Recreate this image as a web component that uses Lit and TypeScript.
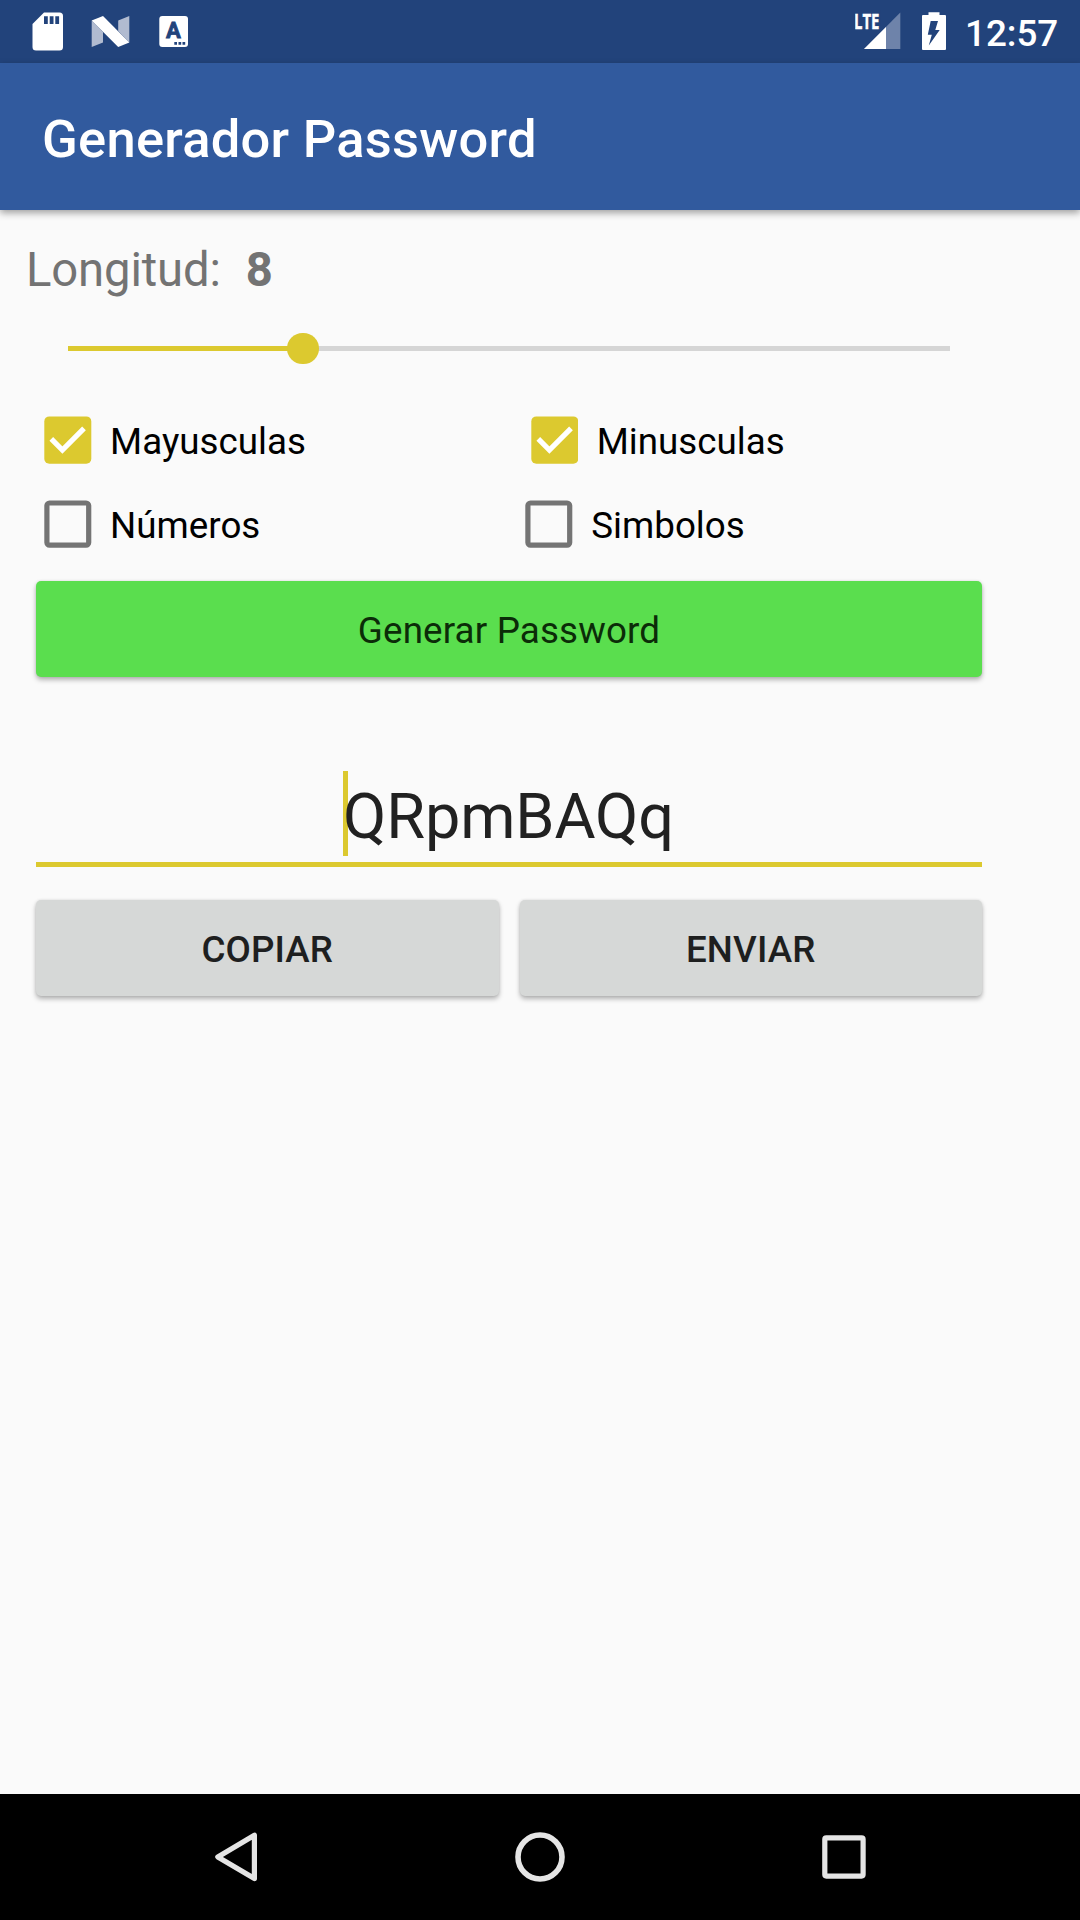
import { LitElement, html, svg, css, nothing } from "lit";
import { customElement, property, state } from "lit/decorators.js";

@customElement("status-bar")
class StatusBar extends LitElement {
  static styles = css`
    :host {
      display: flex;
      align-items: center;
      justify-content: space-between;
      height: 63px;
      background: #22437b;
      color: #fff;
      flex: none;
    }
    .group {
      display: flex;
      align-items: center;
      height: 63px;
    }
    svg {
      display: block;
      flex: none;
    }
    .clock {
      width: 115px;
      padding-top: 3px;
      box-sizing: border-box;
      font: 500 36.75px/43px Roboto, sans-serif;
      white-space: nowrap;
    }
    .lte {
      font: 700 22px "Open Sans", Roboto, sans-serif;
    }
    .badge {
      font: 700 22px Roboto, sans-serif;
    }
  `;

  render() {
    return html`
      <div class="group">
        <svg width="200" height="63" viewBox="0 0 200 63">
          <path
            fill="#fff"
            d="M44 12.5H59.500q3.500 0 3.500 3.500V47q0 3.500-3.500 3.500H36q-3.500 0-3.500-3.500V24z"
          />
          <path fill="#22437b" d="M44 16.300h3.800v7.700H44zM49.700 16.300h3.800v7.700h-3.800zM55.300 16.300h3.800v7.700h-3.800z" />
          <path fill="#b1bbd0" d="M91.700 20.500L103 32V42.500L91.700 47zM118.200 20.500L129.300 16V42.500L118.200 31z" />
          <path fill="#fff" d="M91.700 20.500L103 16L129.300 42.500L118.200 47z" />
          <rect x="159.300" y="16" width="28.700" height="31" rx="3" fill="#fff" />
          <text class="badge" x="173.500" y="38.300" text-anchor="middle" fill="#22437b" stroke="#22437b" stroke-width=".8">A</text>
          <path fill="#22437b" d="M174.300 42h2.700v2.700h-2.700zM178.500 42h2.700v2.700h-2.700zM182.500 42h2.700v2.700h-2.700z" />
        </svg>
      </div>
      <div class="group">
        <svg width="110" height="63" viewBox="855 0 110 63">
          <path fill="#6e83aa" d="M900.300 12.500V49H864z" />
          <path fill="#fff" d="M886 27V49H864z" />
          <path fill="#22437b" d="M855 10H880.500V30H855z" />
          <text class="lte" x="854" y="29" textLength="25.500" lengthAdjust="spacingAndGlyphs" fill="#fff" stroke="#fff" stroke-width=".4">LTE</text>
          <path
            fill="#fff"
            d="M928.500 12.300H939.500V15H945Q946 15 946 16V49Q946 50 945 50H923Q922 50 922 49V16Q922 15 923 15H928.500z"
          />
          <path fill="#22437b" d="M930.700 21H938L935.300 30H939.700L928.800 45.500L931.800 34.700H927.800z" />
        </svg>
        <div class="clock">12:57</div>
      </div>
    `;
  }
}

@customElement("check-option")
class CheckOption extends LitElement {
  @property() label = "";
  @property({ type: Boolean }) checked = false;

  static styles = css`
    :host {
      display: flex;
      align-items: center;
      gap: 18.500px;
      height: 84px;
      color: #000;
    }
    svg {
      display: block;
      flex: none;
    }
    .label {
      padding-top: 2px;
      font: 400 36.75px/43px Roboto, sans-serif;
      white-space: nowrap;
    }
  `;

  render() {
    const box = this.checked
      ? svg`<rect x=".3" y=".4" width="47" height="47.300" rx="5" fill="#dcc92f" />
          <path d="M7.300 22.900L18.400 34L40 12.300" fill="none" stroke="#fff" stroke-width="5.200" />`
      : svg`<rect x="2.900" y="3" width="41.800" height="42.100" rx="2.600" fill="none" stroke="#747474" stroke-width="5.200" />`;
    return html`
      <svg width="47.300" height="48" viewBox="0 0 47.300 48">${box}</svg>
      <span class="label">${this.label}</span>
    `;
  }
}

@customElement("nav-bar")
class NavBar extends LitElement {
  static styles = css`
    :host {
      display: flex;
      justify-content: center;
      height: 126px;
      background: #000;
      flex: none;
    }
    .keys {
      display: grid;
      grid-template-columns: repeat(3, 304px);
      align-items: center;
      justify-items: center;
    }
    svg {
      display: block;
      fill: none;
      stroke: #e5e5e5;
      stroke-width: 5.200;
      stroke-linejoin: round;
    }
  `;

  render() {
    return html`
      <div class="keys">
        <svg width="56" height="56" viewBox="0 0 56 56"><path d="M46.400 6.200V49.600L9.800 27.900z" /></svg>
        <svg width="56" height="56" viewBox="0 0 56 56"><circle cx="28" cy="28" r="22" stroke-width="5.600" /></svg>
        <svg width="56" height="56" viewBox="0 0 56 56"><rect x="8.800" y="8.800" width="38.300" height="38.300" rx="1.500" /></svg>
      </div>
    `;
  }
}

@customElement("app-root")
class AppRoot extends LitElement {
  @state() private length = 8;
  @state() private secret = "QRpmBAQq";
  @state() private focused = true;

  static styles = css`
    :host {
      display: flex;
      flex-direction: column;
      width: 1080px;
      height: 1920px;
      overflow: hidden;
      background: #fafafa;
      font-family: Roboto, sans-serif;
    }
    .appbar {
      display: flex;
      align-items: center;
      flex: none;
      height: 147px;
      padding: 5px 0 0 42px;
      box-sizing: border-box;
      background: #315a9e;
      color: #fff;
      font-size: 52.5px;
      font-weight: 500;
      letter-spacing: 0.26px;
      line-height: 62px;
      box-shadow: 0 3px 7px rgba(0, 0, 0, 0.36);
    }
    .content {
      flex: 1;
      width: 966px;
      padding: 32px 0 0 26px;
      display: flex;
      flex-direction: column;
    }
    .length {
      display: flex;
      gap: 25px;
      height: 56px;
      color: #737373;
      font-size: 47.25px;
      letter-spacing: -0.15px;
      line-height: 56px;
    }
    .value {
      font-weight: 700;
    }
    .slider {
      display: flex;
      align-items: center;
      height: 32px;
      margin: 34.500px 42px 0;
    }
    .filled {
      height: 5px;
      background: #dcc92f;
    }
    .thumb {
      flex: none;
      width: 31.500px;
      height: 31.500px;
      margin: 0 -15.750px;
      border-radius: 50%;
      background: #dcc92f;
      z-index: 1;
    }
    .rest {
      flex: 1;
      height: 5px;
      background: #d5d5d5;
    }
    .options {
      margin-top: 33.500px;
      padding-left: 18.300px;
    }
    .row {
      display: flex;
    }
    .first {
      width: 486.700px;
    }
    .row + .row .first {
      width: 481.200px;
    }
    button {
      flex: 1;
      height: 96px;
      padding: 2px 0 0;
      border: 0;
      border-radius: 5px;
      background: #d6d8d7;
      color: #1e1f1f;
      font: 500 36.75px/43px Roboto, sans-serif;
      letter-spacing: 0.12px;
      box-shadow: 0 3px 5px rgba(0, 0, 0, 0.28), 0 0 3px rgba(0, 0, 0, 0.1);
    }
    .generate {
      flex: none;
      margin: 15px 10px 0;
      background: #5ade4e;
      color: #0b2c08;
      font-weight: 400;
      letter-spacing: 0.15px;
    }
    .field {
      display: flex;
      justify-content: center;
      height: 91px;
      margin: 94px 10px 0;
      padding-right: 1px;
      border-bottom: 5px solid #dcc92f;
      color: #212121;
      font-size: 63px;
      letter-spacing: -0.12px;
      line-height: 92px;
    }
    .caret {
      width: 5px;
      height: 85px;
      margin-right: -5px;
      background: #dcc92f;
    }
    .actions {
      display: flex;
      gap: 21px;
      margin: 33px 10px 0;
    }
  `;

  render() {
    return html`
      <status-bar></status-bar>
      <div class="appbar">Generador Password</div>
      <div class="content">
        <div class="length"><span>Longitud:</span><span class="value">${this.length}</span></div>
        <div class="slider">
          <div class="filled" style="width:${(this.length / 30) * 100}%"></div>
          <div class="thumb"></div>
          <div class="rest"></div>
        </div>
        <div class="options">
          <div class="row">
            <check-option class="first" label="Mayusculas" checked></check-option>
            <check-option label="Minusculas" checked></check-option>
          </div>
          <div class="row">
            <check-option class="first" label="Números"></check-option>
            <check-option label="Simbolos"></check-option>
          </div>
        </div>
        <button class="generate">Generar Password</button>
        <div class="field">
          ${this.focused ? html`<span class="caret"></span>` : nothing}
          <span class="secret">${this.secret}</span>
        </div>
        <div class="actions">
          <button>COPIAR</button>
          <button>ENVIAR</button>
        </div>
      </div>
      <nav-bar></nav-bar>
    `;
  }
}
